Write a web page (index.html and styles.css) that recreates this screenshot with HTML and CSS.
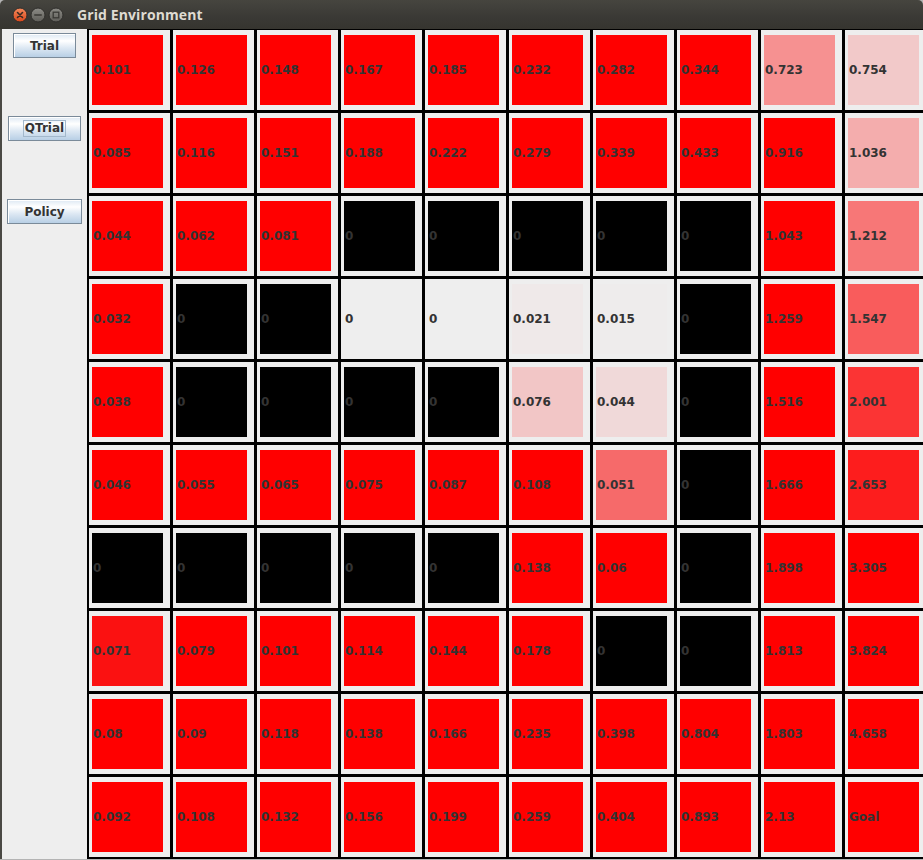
FILE: index.html
```html
<!DOCTYPE html>
<html>
<head>
<meta charset="utf-8">
<title>Grid Environment</title>
<link rel="stylesheet" href="styles.css">
</head>
<body>
<div class="window">
  <div class="titlebar">
    <div class="controls">
      <svg class="ctl" width="16" height="16" viewBox="0 0 16 16">
        <defs>
          <linearGradient id="gc" x1="0" y1="0" x2="0" y2="1">
            <stop offset="0" stop-color="#f58a5c"/>
            <stop offset="1" stop-color="#d9461a"/>
          </linearGradient>
          <linearGradient id="gg" x1="0" y1="0" x2="0" y2="1">
            <stop offset="0" stop-color="#8c8b86"/>
            <stop offset="1" stop-color="#5e5d58"/>
          </linearGradient>
        </defs>
        <circle cx="8" cy="8" r="7" fill="url(#gc)" stroke="#2e2d2a" stroke-width="1"/>
        <path d="M5.5 5.5 L10.5 10.5 M10.5 5.5 L5.5 10.5" stroke="#3a2a22" stroke-width="1.6" stroke-linecap="round"/>
      </svg>
      <svg class="ctl" width="16" height="16" viewBox="0 0 16 16">
        <circle cx="8" cy="8" r="7" fill="url(#gg)" stroke="#2e2d2a" stroke-width="1"/>
        <path d="M4.8 8 L11.2 8" stroke="#3a3935" stroke-width="1.6" stroke-linecap="round"/>
      </svg>
      <svg class="ctl" width="16" height="16" viewBox="0 0 16 16">
        <circle cx="8" cy="8" r="7" fill="url(#gg)" stroke="#2e2d2a" stroke-width="1"/>
        <rect x="5.2" y="5.2" width="5.6" height="5.6" fill="none" stroke="#3a3935" stroke-width="1.3"/>
      </svg>
    </div>
    <div class="title">Grid Environment</div>
  </div>
  <div class="content">
    <div class="sidebar">
      <div class="slot"><button class="btn">Trial</button></div>
      <div class="slot"><button class="btn"><span class="focus">QTrial</span></button></div>
      <div class="slot"><button class="btn">Policy</button></div>
    </div>
    <div class="grid" id="grid"></div>
  </div>
</div>
<script src="script.js"></script>
</body>
</html>
```
FILE: script.js
```js
(function () {
  // each entry: [text, type, colour]
  // type r = full red, b = wall (black), e = empty, p = shaded (colour given)
  var R = 'r', B = 'b', E = 'e', P = 'p';
  var rows = [
    [['0.101',R],['0.126',R],['0.148',R],['0.167',R],['0.185',R],['0.232',R],['0.282',R],['0.344',R],['0.723',P,'#f69191'],['0.754',P,'#f2c9c9']],
    [['0.085',R],['0.116',R],['0.151',R],['0.188',R],['0.222',R],['0.279',R],['0.339',R],['0.433',R],['0.916',R],['1.036',P,'#f4adad']],
    [['0.044',R],['0.062',R],['0.081',R],['0',B],['0',B],['0',B],['0',B],['0',B],['1.043',R],['1.212',P,'#f77777']],
    [['0.032',R],['0',B],['0',B],['0',E],['0',E],['0.021',P,'#efe9e9'],['0.015',P,'#eeecec'],['0',B],['1.259',R],['1.547',P,'#f95c5c']],
    [['0.038',R],['0',B],['0',B],['0',B],['0',B],['0.076',P,'#f2c6c6'],['0.044',P,'#f0d9d9'],['0',B],['1.516',R],['2.001',P,'#fb3434']],
    [['0.046',R],['0.055',R],['0.065',R],['0.075',R],['0.087',R],['0.108',R],['0.051',P,'#f66a6a'],['0',B],['1.666',R],['2.653',P,'#fd1d1d']],
    [['0',B],['0',B],['0',B],['0',B],['0',B],['0.138',R],['0.06',R],['0',B],['1.898',R],['3.305',R]],
    [['0.071',P,'#fb1111'],['0.079',R],['0.101',R],['0.114',R],['0.144',R],['0.178',R],['0',B],['0',B],['1.813',R],['3.824',R]],
    [['0.08',R],['0.09',R],['0.118',R],['0.138',R],['0.166',R],['0.235',R],['0.398',R],['0.804',R],['1.803',R],['4.658',R]],
    [['0.092',R],['0.108',R],['0.132',R],['0.156',R],['0.199',R],['0.259',R],['0.404',R],['0.893',R],['2.13',R],['Goal',R]]
  ];
  var grid = document.getElementById('grid');
  rows.forEach(function (row) {
    row.forEach(function (c) {
      var cell = document.createElement('div');
      cell.className = 'cell';
      var v = document.createElement('div');
      var cls = c[1] === R ? 'red' : c[1] === B ? 'wall' : c[1] === E ? 'empty' : 'shade';
      v.className = 'val ' + cls;
      if (c[1] === P) v.style.background = c[2];
      v.textContent = c[0];
      cell.appendChild(v);
      grid.appendChild(cell);
    });
  });
})();
```
FILE: styles.css
```css
html, body {
  margin: 0;
  padding: 0;
}
body {
  width: 923px;
  height: 860px;
  overflow: hidden;
  background: #b4b4b4;
}
.window {
  width: 923px;
  height: 860px;
  display: flex;
  flex-direction: column;
}
.titlebar {
  height: 29px;
  flex: none;
  display: flex;
  align-items: center;
  background: linear-gradient(#46453f, #3a3935 60%, #36352f);
  border-radius: 5px 5px 0 0;
}
.controls {
  display: flex;
  align-items: center;
  gap: 2px;
  padding-left: 12px;
  padding-top: 1px;
}
.ctl {
  display: block;
}
.title {
  margin-left: 13px;
  font-family: "Open Sans", "DejaVu Sans", sans-serif;
  font-weight: 700;
  font-size: 14px;
  color: #dfdbd2;
  letter-spacing: 0.1px;
}
.content {
  height: 830px;
  flex: none;
  display: flex;
  background: #eeeeee;
  border-left: 2px solid #4a4944;
}
.sidebar {
  width: 85px;
  flex: none;
  display: grid;
  grid-auto-rows: 83px;
  align-content: start;
  background: #eeeeee;
}
.slot {
  display: flex;
  justify-content: center;
  align-items: flex-start;
  padding-top: 4px;
}
.btn {
  height: 25px;
  padding: 0 16px;
  margin: 0;
  border: 1px solid #7a8a99;
  border-radius: 0;
  background: linear-gradient(#dde8f3 0%, #ffffff 30%, #dde8f3 60%, #b8cfe5 100%);
  box-shadow: inset 1px 1px 0 #ffffff;
  font-family: "DejaVu Sans", sans-serif;
  font-weight: 700;
  font-size: 12px;
  color: #333333;
  display: flex;
  align-items: center;
  justify-content: center;
}
.focus {
  outline: 1px solid #a3b8cc;
  outline-offset: 1px;
  line-height: 13px;
}
.grid {
  flex: none;
  display: grid;
  grid-template-columns: repeat(10, 84px);
  grid-template-rows: repeat(10, 83px);
  border-left: 1px solid #000;
}
.cell {
  box-sizing: border-box;
  border-style: solid;
  border-color: #000;
  border-width: 1px 2px 2px 1px;
  padding: 5px 7px 5px 3px;
  background: #eeeeee;
}
.val {
  width: 71px;
  height: 70px;
  display: flex;
  align-items: center;
  padding-left: 1px;
  box-sizing: border-box;
  font-family: "DejaVu Sans", sans-serif;
  font-weight: 700;
  font-size: 12px;
  color: #333333;
  white-space: nowrap;
  overflow: hidden;
}
.red {
  background: #ff0000;
}
.wall {
  background: #000000;
}
.empty {
  background: #eeeeee;
}
```
